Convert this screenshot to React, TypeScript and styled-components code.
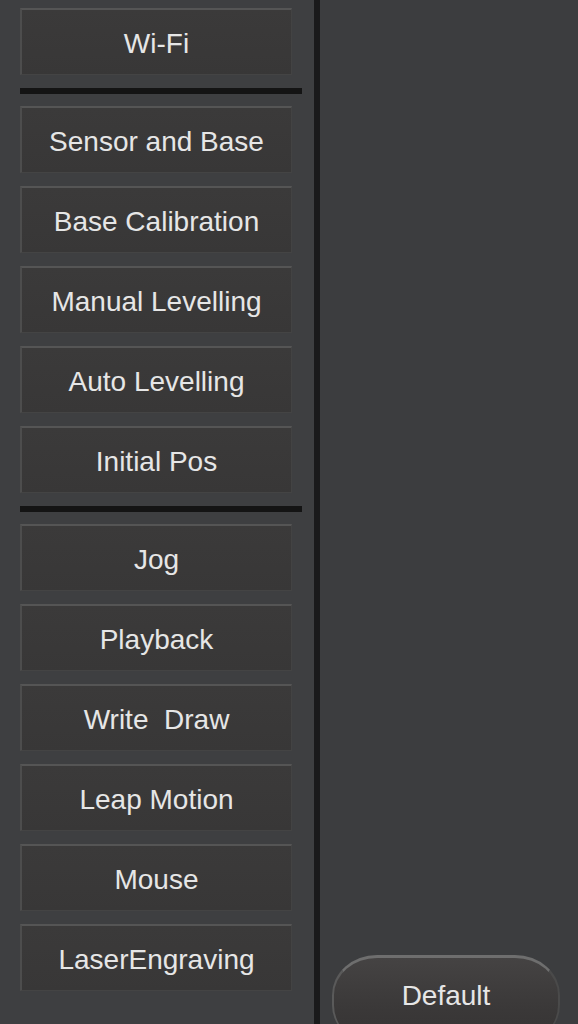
import React from "react";
import styled, { createGlobalStyle } from "styled-components";

const GlobalStyle = createGlobalStyle`
  html, body {
    margin: 0;
    padding: 0;
    background: #3c3d3f;
    overflow: hidden;
  }
  body {
    font-family: "Liberation Sans", Arial, sans-serif;
  }
`;

const Screen = styled.div`
  display: flex;
  width: 578px;
  height: 1024px;
  background: #3c3d3f;
  overflow: hidden;
`;

const Sidebar = styled.div`
  width: 314px;
  flex-shrink: 0;
  display: flex;
  flex-direction: column;
  padding: 8px 0 0 20px;
  box-sizing: border-box;
  background: #3e3f41;
`;

const Divider = styled.div`
  width: 6px;
  flex-shrink: 0;
  background: #1a1a1b;
`;

const Main = styled.div`
  flex: 1;
  display: flex;
  align-items: flex-end;
  padding: 0 0 0 12px;
  background: #3c3d3f;
`;

const Group = styled.div`
  display: flex;
  flex-direction: column;
  gap: 13px;
`;

const MenuButton = styled.div`
  width: 272px;
  height: 67px;
  box-sizing: border-box;
  display: flex;
  align-items: center;
  justify-content: center;
  padding-top: 3px;
  background: linear-gradient(180deg, #3b3a3a 0%, #383737 100%);
  border-top: 2px solid #555555;
  border-left: 2px solid #4d4d4d;
  border-right: 1px solid #434343;
  border-bottom: 1px solid #444444;
  color: #e6e6e6;
  font-size: 28px;
  white-space: pre;
`;

const Separator = styled.div<{ $top: number; $bottom: number }>`
  width: 282px;
  height: 6px;
  margin: ${(p) => `${p.$top}px 0 ${p.$bottom}px`};
  background: #141414;
`;

const PillButton = styled.div`
  width: 228px;
  height: 90px;
  margin-bottom: -21px;
  box-sizing: border-box;
  border-radius: 45px / 40px;
  border-top: 3px solid #6e6e6e;
  border-left: 2px solid #5a5a5a;
  border-right: 2px solid #4a4a4a;
  background: linear-gradient(180deg, #454343 0%, #3a3838 60%, #353333 100%);
  display: flex;
  align-items: flex-start;
  justify-content: center;
  padding-top: 22px;
  color: #e6e6e6;
  font-size: 28px;
`;

const groups = [
  ["Wi-Fi"],
  ["Sensor and Base", "Base Calibration", "Manual Levelling", "Auto Levelling", "Initial Pos"],
  ["Jog", "Playback", "Write  Draw", "Leap Motion", "Mouse", "LaserEngraving"],
];

export default function App() {
  return (
    <Screen>
      <GlobalStyle />
      <Sidebar>
        {groups.map((items, gi) => (
          <React.Fragment key={gi}>
            {gi > 0 && <Separator $top={13} $bottom={12} />}
            <Group>
              {items.map((label) => (
                <MenuButton key={label}>{label}</MenuButton>
              ))}
            </Group>
          </React.Fragment>
        ))}
      </Sidebar>
      <Divider />
      <Main>
        <PillButton>Default</PillButton>
      </Main>
    </Screen>
  );
}
